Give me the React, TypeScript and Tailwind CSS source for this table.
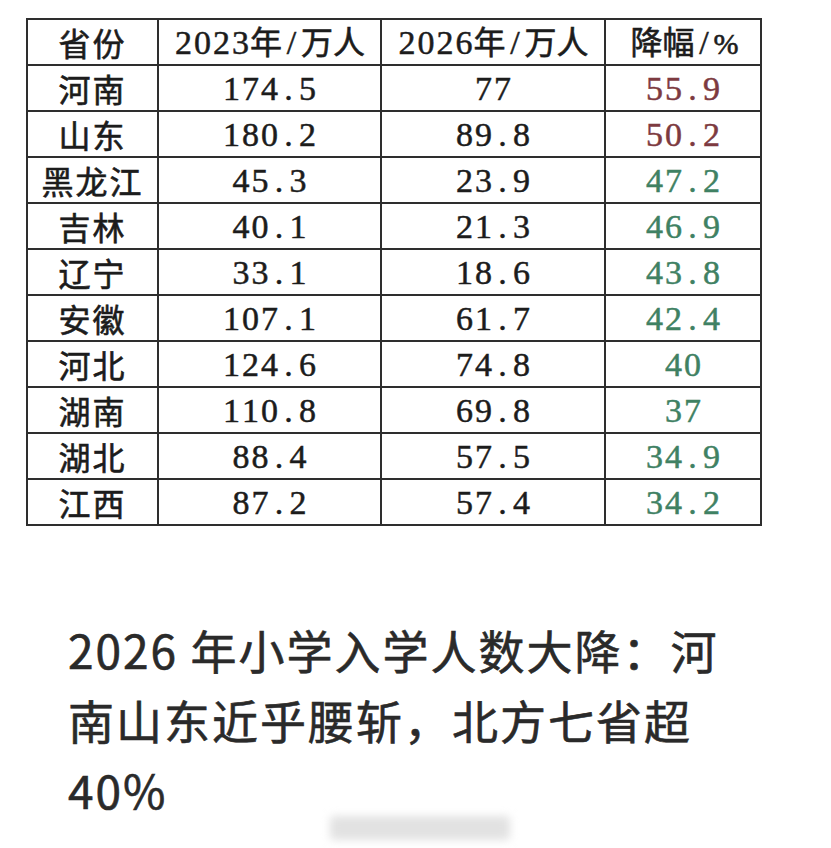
const rows: [string, string, string, string, "red" | "green"][] = [
  ["河南", "174.5", "77", "55.9", "red"],
  ["山东", "180.2", "89.8", "50.2", "red"],
  ["黑龙江", "45.3", "23.9", "47.2", "green"],
  ["吉林", "40.1", "21.3", "46.9", "green"],
  ["辽宁", "33.1", "18.6", "43.8", "green"],
  ["安徽", "107.1", "61.7", "42.4", "green"],
  ["河北", "124.6", "74.8", "40", "green"],
  ["湖南", "110.8", "69.8", "37", "green"],
  ["湖北", "88.4", "57.5", "34.9", "green"],
  ["江西", "87.2", "57.4", "34.2", "green"],
];

const Num = ({ value }: { value: string }) => (
  <span className="inline-flex font-['Liberation_Serif',serif] text-[34px] [-webkit-text-stroke:0.5px]">
    {value.split("").map((ch, i) => (
      <span key={i} className="inline-block w-[19px] text-center">
        {ch}
      </span>
    ))}
  </span>
);

const Cell = ({ children, className = "" }: { children: React.ReactNode; className?: string }) => (
  <td className={`h-[46px] border-2 border-[#2e2e2e] p-0 text-center align-middle ${className}`}>{children}</td>
);

const App = () => {
  return (
    <div className="min-h-[848px] w-[831px] bg-white">
      <div className="pl-[26px] pt-[18px]">
        <table className="w-[734px] table-fixed border-collapse font-['Noto_Sans_CJK_SC','Liberation_Serif',serif] text-[32px] leading-none text-[#1c1c1c]">
          <colgroup>
            <col className="w-[131px]" />
            <col className="w-[223px]" />
            <col className="w-[224px]" />
            <col className="w-[156px]" />
          </colgroup>
          <thead>
            <tr>
              <Cell className="tracking-[2px] [-webkit-text-stroke:0.6px]">省份</Cell>
              <Cell className="[-webkit-text-stroke:0.6px]">
                <Num value="2023" />年<Num value="/" />万人
              </Cell>
              <Cell className="[-webkit-text-stroke:0.6px]">
                <Num value="2026" />年<Num value="/" />万人
              </Cell>
              <Cell className="[-webkit-text-stroke:0.6px]">
                降幅<Num value="/" />
                <span className="inline-block w-[22px] font-['Liberation_Serif',serif] text-[30px]">%</span>
              </Cell>
            </tr>
          </thead>
          <tbody>
            {rows.map(([name, a, b, pct, tone]) => (
              <tr key={name}>
                <Cell className="tracking-[2px] [-webkit-text-stroke:0.6px]">{name}</Cell>
                <Cell>
                  <Num value={a} />
                </Cell>
                <Cell>
                  <Num value={b} />
                </Cell>
                <Cell className={tone === "red" ? "text-[#7d3a40]" : "text-[#3f8163]"}>
                  <Num value={pct} />
                </Cell>
              </tr>
            ))}
          </tbody>
        </table>
      </div>

      <div className="pl-[68px] pt-[88px] font-['Noto_Sans_CJK_SC','Noto_Sans',sans-serif] text-[46px] leading-[70px] tracking-[2px] text-[#2a2a2a] [-webkit-text-stroke:0.6px]">
        <div>2026 年小学入学人数大降：河</div>
        <div>南山东近乎腰斩，北方七省超</div>
        <div>40%</div>
      </div>

      <div className="flex justify-center pl-[8px]">
        <div className="-mt-[8px] h-[24px] w-[180px] rounded bg-[#e2e2e2] blur-[4px]" />
      </div>
    </div>
  );
};

export default App;
